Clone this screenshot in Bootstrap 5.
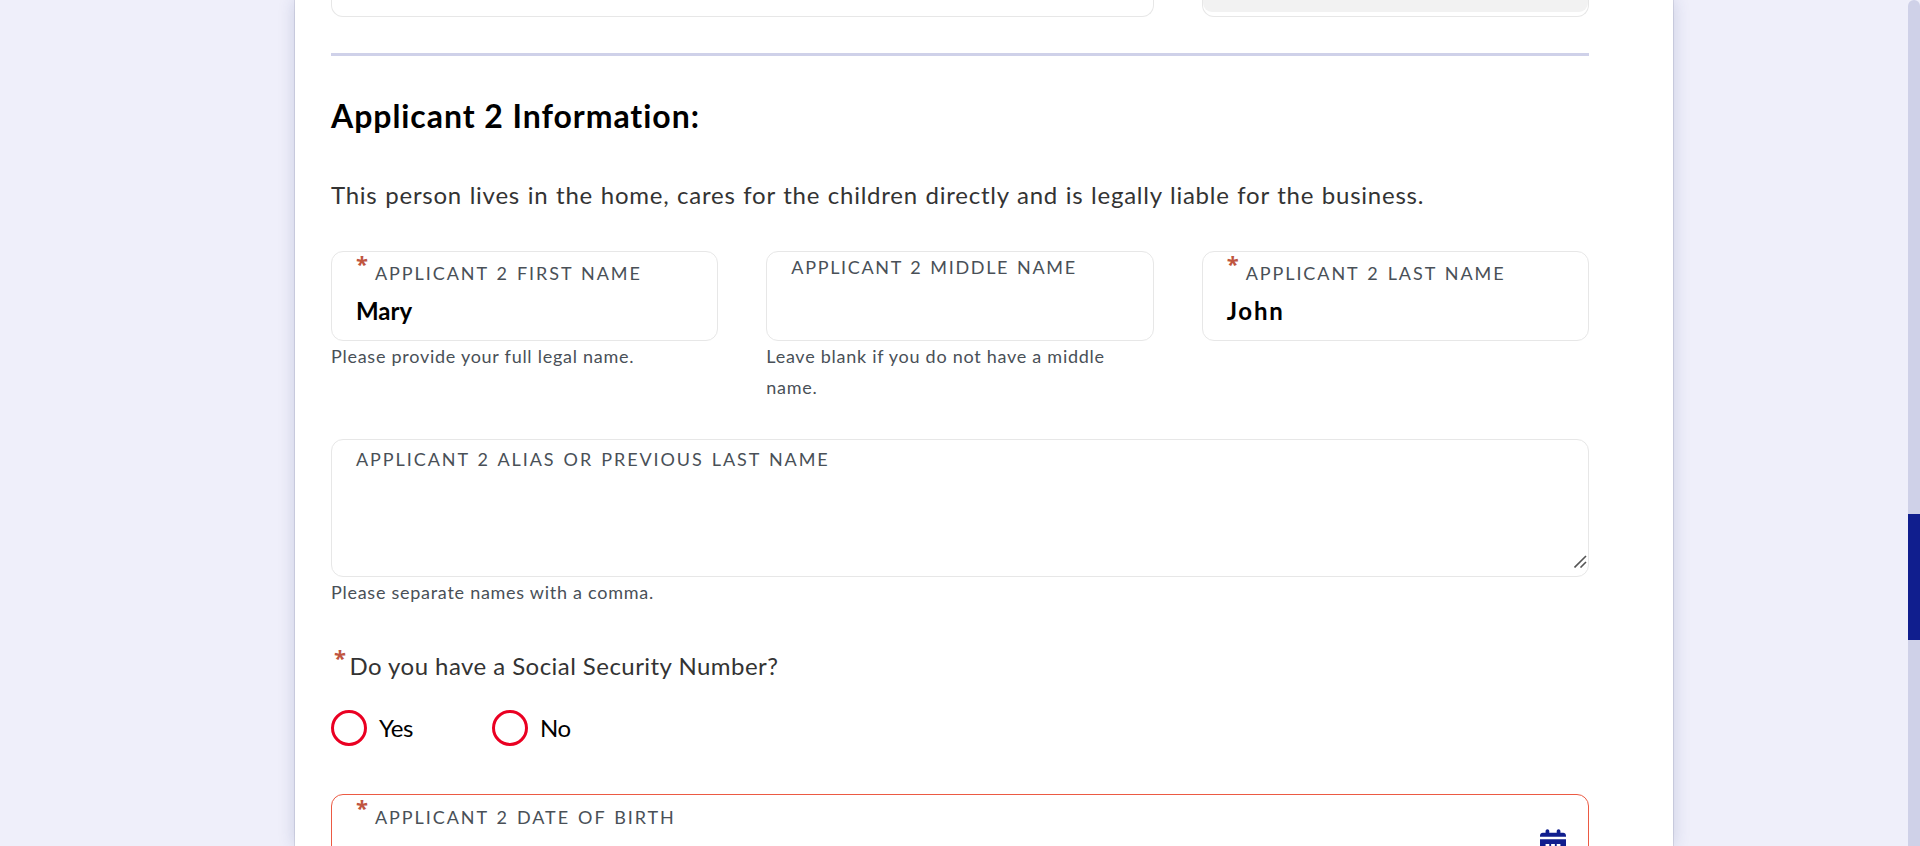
<!DOCTYPE html>
<html lang="en">
<head>
<meta charset="utf-8">
<title>Applicant 2 Information</title>
<meta name="viewport" content="width=device-width, initial-scale=1">
<link href="https://cdn.jsdelivr.net/npm/bootstrap@5.3.0/dist/css/bootstrap.min.css" rel="stylesheet">
<style>
body{background:#efeffa;font-family:Lato,"Open Sans",sans-serif;font-variant-ligatures:none;color:#333;height:846px;overflow:hidden}
.sheet{width:1378px;height:846px;margin-left:295px;padding:0 84px 0 36px;box-shadow:0 0 16px rgba(40,60,130,.2),0 0 1px rgba(60,60,90,.7)}
.field{border:1px solid #e7e7e7;border-radius:12px;padding:0 24px;background:#fff}
.field-sm{height:90px;padding-top:11px}
.field-plain{padding-top:5px}
.field-area{height:138px;padding-top:9px;margin-top:36px}
.field-date{height:90px;padding-top:12px;margin-top:48px;border-color:#ec5a43}
.cut{height:17px;border-top:0;border-radius:0 0 12px 12px}
.shade{background:#f2f2f2;height:12px;margin:0 -24px;border-radius:0 0 9px 9px}
.rule{height:3px;background:#cfd1e9;margin-top:36px}
.title{font-size:32px;line-height:40px;margin:40px 0 0;letter-spacing:.95px;color:#000}
.lede{font-size:24px;line-height:36px;margin:41px 0 38px;letter-spacing:.75px;word-spacing:.85px}
.cap{display:block;font-size:18px;line-height:20px;letter-spacing:1.92px;word-spacing:1.6px;color:#495057;text-transform:uppercase;white-space:nowrap}
.cap-tight{letter-spacing:1.67px}
.val{font-size:24px;line-height:28px;margin-top:14px;color:#000}
.val-wide{letter-spacing:1.8px}
.hint{font-size:18px;line-height:31px;letter-spacing:.73px;color:#495057}
.star{color:#c0563f;font:700 22px/20px "Open Sans",sans-serif;width:19px;margin-top:-10px}
.ask{font-size:24px;line-height:36px;letter-spacing:.45px;margin-top:40px}
.ask .star{margin:-1px 0 0 3px;width:15.5px}
.choices{margin-top:26px}
.choices label{width:161px;gap:12px}
.ring{width:36px;height:36px;border:3px solid #ea0022}
.opt{font-size:24px;line-height:36px;color:#000;letter-spacing:-.5px}
.grip{right:1px;bottom:8px}
.cal{right:22px;top:34px}
.track{width:12px;background:#cfd1e8;border-radius:8px 8px 0 0}
.thumb{height:126px;margin-top:514px;background:#101e8e}
</style>
</head>
<body>
<div class="d-flex justify-content-between">
  <main class="sheet bg-white">
    <div class="row gx-5">
      <div class="col-8"><div class="field cut"></div></div>
      <div class="col-4"><div class="field cut"><div class="shade"></div></div></div>
    </div>
    <div class="rule"></div>
    <h2 class="title fw-bold">Applicant 2 Information:</h2>
    <p class="lede">This person lives in the home, cares for the children directly and is legally liable for the business.</p>
    <div class="row gx-5">
      <div class="col-4">
        <div class="field field-sm">
          <div class="d-flex"><span class="star">*</span><span class="cap">Applicant 2 First Name</span></div>
          <div class="val fw-bold">Mary</div>
        </div>
        <div class="hint">Please provide your full legal name.</div>
      </div>
      <div class="col-4">
        <div class="field field-sm field-plain"><span class="cap cap-tight">Applicant 2 Middle Name</span></div>
        <div class="hint">Leave blank if you do not have a middle name.</div>
      </div>
      <div class="col-4">
        <div class="field field-sm">
          <div class="d-flex"><span class="star">*</span><span class="cap">Applicant 2 Last Name</span></div>
          <div class="val val-wide fw-bold">John</div>
        </div>
      </div>
    </div>
    <div class="field field-area position-relative">
      <span class="cap">Applicant 2 Alias or Previous Last Name</span>
      <svg class="grip position-absolute" width="13" height="13" viewBox="0 0 13 13" fill="none" stroke="#555" stroke-width="1.6"><path d="M.5 12.5 12 1M6.500 12.500 12 7"/></svg>
    </div>
    <div class="hint">Please separate names with a comma.</div>
    <div class="ask d-flex"><span class="star">*</span><span>Do you have a Social Security Number?</span></div>
    <div class="choices d-flex">
      <label class="d-flex"><span class="ring rounded-circle"></span><span class="opt">Yes</span></label>
      <label class="d-flex"><span class="ring rounded-circle"></span><span class="opt">No</span></label>
    </div>
    <div class="field field-date position-relative">
      <div class="d-flex"><span class="star">*</span><span class="cap">Applicant 2 Date of Birth</span></div>
      <svg class="cal position-absolute" width="26" height="30" viewBox="0 0 448 512" fill="#101e8e"><path fill-rule="evenodd" d="M128 0c17.700 0 32 14.300 32 32v32h128V32c0-17.700 14.300-32 32-32s32 14.300 32 32v32h48c26.500 0 48 21.500 48 48v20H0v-20c0-26.500 21.500-48 48-48h48V32c0-17.700 14.300-32 32-32zM0 176h448v288c0 26.500-21.500 48-48 48H48c-26.500 0-48-21.500-48-48zM96 256v56h64v-56zm96 0v56h64v-56zm96 0v56h64v-56zM96 368v56h64v-56zm96 0v56h64v-56zm96 0v56h64v-56z"/></svg>
    </div>
  </main>
  <div class="track"><div class="thumb"></div></div>
</div>
<script src="https://cdn.jsdelivr.net/npm/bootstrap@5.3.0/dist/js/bootstrap.bundle.min.js"></script>
</body>
</html>
